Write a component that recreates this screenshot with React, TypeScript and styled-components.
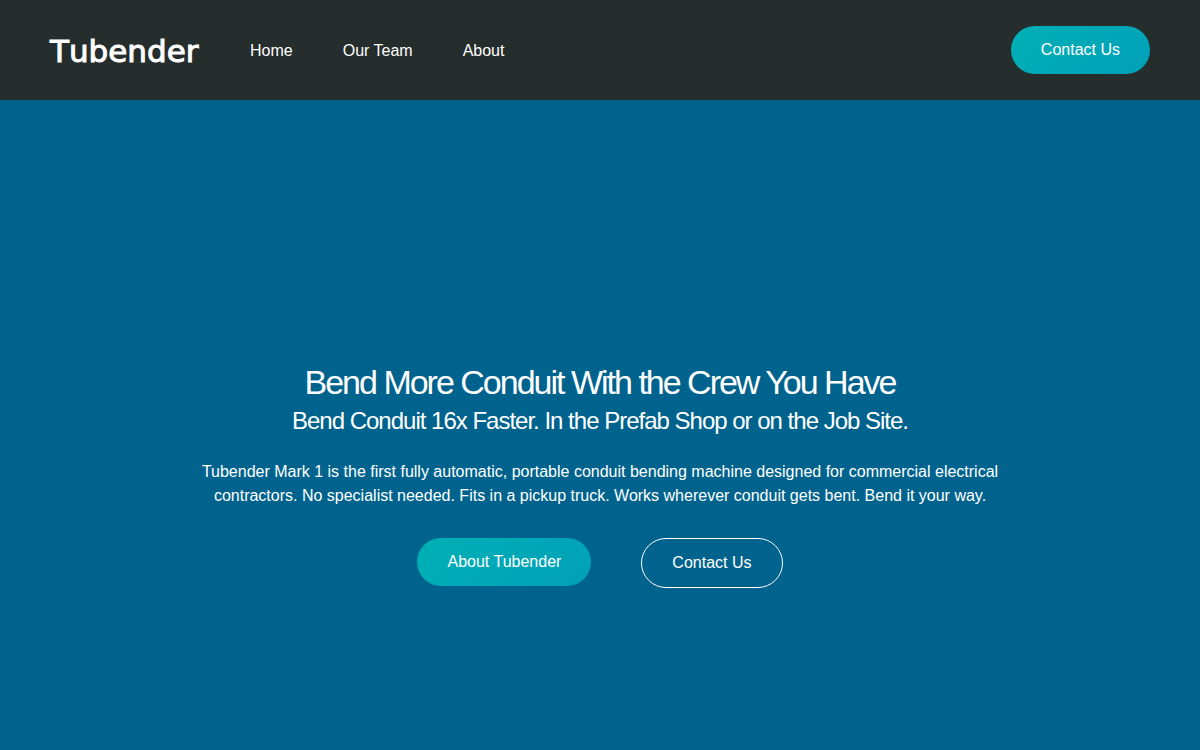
import React from "react";
import styled, { createGlobalStyle, css } from "styled-components";

const GlobalStyle = createGlobalStyle`
  *, *::before, *::after { box-sizing: border-box; }
  body {
    margin: 0;
    background: #00638d;
    color: #fff;
    font: 16px/24px "Liberation Sans", Arial, sans-serif;
  }
`;

const Page = styled.div`
  display: flex;
  flex-direction: column;
  min-height: 100vh;
`;

const Header = styled.header`
  display: flex;
  align-items: center;
  gap: 50px;
  min-height: 100px;
  padding: 0 50px;
  background: #262d2d;
`;

const Logo = styled.a`
  width: 150px;
  padding-top: 2px;
  color: #fff;
  font-family: "DejaVu Sans", sans-serif;
  font-size: 31px;
  font-kerning: none;
  line-height: 32px;
  text-decoration: none;
  -webkit-text-stroke: 1px #fff;
`;

const Nav = styled.nav`
  display: flex;
  flex: 1;
  gap: 50px;
  padding-top: 2px;
`;

const NavLink = styled.a`
  color: #fff;
  text-decoration: none;
`;

const Button = styled.button<{ $outlined?: boolean }>`
  padding: 12px 30px;
  border: 0;
  border-radius: 25px;
  background: linear-gradient(135deg, #00b0b5, #00a0b8);
  color: #fff;
  font: inherit;
  white-space: nowrap;
  cursor: pointer;
  ${({ $outlined }) =>
    $outlined &&
    css`
      border: 1px solid #fff;
      background: transparent;
    `}
`;

const Hero = styled.main`
  display: flex;
  flex: 1;
  flex-direction: column;
  align-items: center;
  justify-content: center;
  padding: 100px 50px 0;
  text-align: center;
`;

const Title = styled.h1`
  margin: 0;
  font-size: 34px;
  font-weight: 400;
  line-height: 40px;
  letter-spacing: -2px;
`;

const Subtitle = styled.h2`
  margin: 0;
  font-size: 24px;
  font-weight: 400;
  line-height: 38px;
  letter-spacing: -1px;
`;

const Lead = styled.p`
  max-width: 800px;
  margin: 20px 0 30px;
`;

const Actions = styled.div`
  display: flex;
  flex-wrap: wrap;
  align-items: flex-start;
  justify-content: center;
  gap: 50px;
`;

const links = ["Home", "Our Team", "About"];

export default function App() {
  return (
    <Page>
      <GlobalStyle />
      <Header>
        <Logo href="#">Tubender</Logo>
        <Nav>
          {links.map((label) => (
            <NavLink key={label} href="#">
              {label}
            </NavLink>
          ))}
        </Nav>
        <Button type="button">Contact Us</Button>
      </Header>
      <Hero>
        <Title>Bend More Conduit With the Crew You Have</Title>
        <Subtitle>Bend Conduit 16x Faster. In the Prefab Shop or on the Job Site.</Subtitle>
        <Lead>
          Tubender Mark 1 is the first fully automatic, portable conduit bending machine designed
          for commercial electrical contractors. No specialist needed. Fits in a pickup truck. Works
          wherever conduit gets bent. Bend it your way.
        </Lead>
        <Actions>
          <Button type="button">About Tubender</Button>
          <Button type="button" $outlined>
            Contact Us
          </Button>
        </Actions>
      </Hero>
    </Page>
  );
}
